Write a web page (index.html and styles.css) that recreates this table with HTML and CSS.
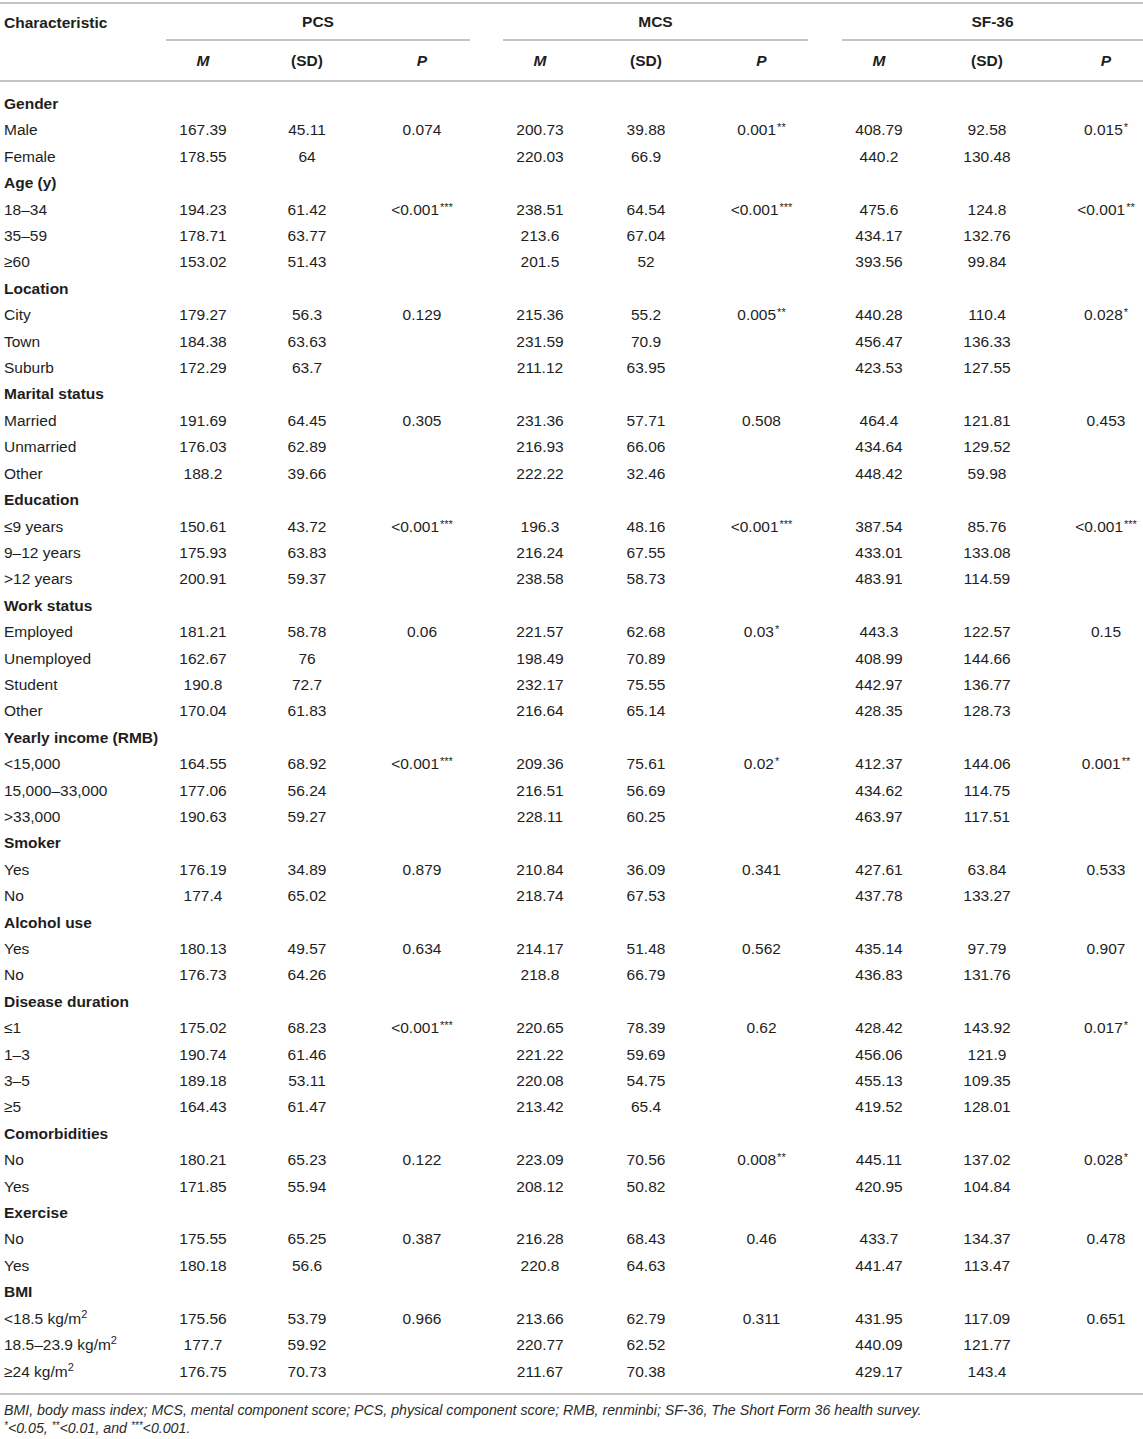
FILE: index.html
```html
<!DOCTYPE html>
<html>
<head>
<meta charset="utf-8">
<link rel="stylesheet" href="styles.css">
</head>
<body>
<table class="t">
<colgroup>
<col class="w-char"><col class="w74"><col class="w134"><col class="w96"><col class="w33">
<col class="w74"><col class="w138"><col class="w93"><col class="w34">
<col class="w74"><col class="w142"><col class="w85">
</colgroup>
<thead>
<tr class="h1">
<th class="char">Characteristic</th>
<th class="grp" colspan="3">PCS</th><th></th>
<th class="grp" colspan="3">MCS</th><th></th>
<th class="grp sf" colspan="3">SF-36</th>
</tr>
<tr class="h2">
<th></th>
<th><i>M</i></th><th>(SD)</th><th><i>P</i></th><th></th>
<th><i>M</i></th><th>(SD)</th><th><i>P</i></th><th></th>
<th><i>M</i></th><th>(SD)</th><th class="lastp"><i>P</i></th>
</tr>
</thead>
<tbody id="tb">
</tbody>
</table>
<div class="notes">
<p><i>BMI, body mass index; MCS, mental component score; PCS, physical component score; RMB, renminbi; SF-36, The Short Form 36 health survey.</i></p>
<p><i><sup>*</sup>&lt;0.05, <sup>**</sup>&lt;0.01, and <sup>***</sup>&lt;0.001.</i></p>
</div>
<script src="app.js"></script>
</body>
</html>
```
FILE: app.js
```js
var data = [
["#Gender"],
["Male","167.39","45.11","0.074","200.73","39.88","0.001**","408.79","92.58","0.015*"],
["Female","178.55","64","","220.03","66.9","","440.2","130.48",""],
["#Age (y)"],
["18–34","194.23","61.42","<0.001***","238.51","64.54","<0.001***","475.6","124.8","<0.001**"],
["35–59","178.71","63.77","","213.6","67.04","","434.17","132.76",""],
["≥60","153.02","51.43","","201.5","52","","393.56","99.84",""],
["#Location"],
["City","179.27","56.3","0.129","215.36","55.2","0.005**","440.28","110.4","0.028*"],
["Town","184.38","63.63","","231.59","70.9","","456.47","136.33",""],
["Suburb","172.29","63.7","","211.12","63.95","","423.53","127.55",""],
["#Marital status"],
["Married","191.69","64.45","0.305","231.36","57.71","0.508","464.4","121.81","0.453"],
["Unmarried","176.03","62.89","","216.93","66.06","","434.64","129.52",""],
["Other","188.2","39.66","","222.22","32.46","","448.42","59.98",""],
["#Education"],
["≤9 years","150.61","43.72","<0.001***","196.3","48.16","<0.001***","387.54","85.76","<0.001***"],
["9–12 years","175.93","63.83","","216.24","67.55","","433.01","133.08",""],
[">12 years","200.91","59.37","","238.58","58.73","","483.91","114.59",""],
["#Work status"],
["Employed","181.21","58.78","0.06","221.57","62.68","0.03*","443.3","122.57","0.15"],
["Unemployed","162.67","76","","198.49","70.89","","408.99","144.66",""],
["Student","190.8","72.7","","232.17","75.55","","442.97","136.77",""],
["Other","170.04","61.83","","216.64","65.14","","428.35","128.73",""],
["#Yearly income (RMB)"],
["<15,000","164.55","68.92","<0.001***","209.36","75.61","0.02*","412.37","144.06","0.001**"],
["15,000–33,000","177.06","56.24","","216.51","56.69","","434.62","114.75",""],
[">33,000","190.63","59.27","","228.11","60.25","","463.97","117.51",""],
["#Smoker"],
["Yes","176.19","34.89","0.879","210.84","36.09","0.341","427.61","63.84","0.533"],
["No","177.4","65.02","","218.74","67.53","","437.78","133.27",""],
["#Alcohol use"],
["Yes","180.13","49.57","0.634","214.17","51.48","0.562","435.14","97.79","0.907"],
["No","176.73","64.26","","218.8","66.79","","436.83","131.76",""],
["#Disease duration"],
["≤1","175.02","68.23","<0.001***","220.65","78.39","0.62","428.42","143.92","0.017*"],
["1–3","190.74","61.46","","221.22","59.69","","456.06","121.9",""],
["3–5","189.18","53.11","","220.08","54.75","","455.13","109.35",""],
["≥5","164.43","61.47","","213.42","65.4","","419.52","128.01",""],
["#Comorbidities"],
["No","180.21","65.23","0.122","223.09","70.56","0.008**","445.11","137.02","0.028*"],
["Yes","171.85","55.94","","208.12","50.82","","420.95","104.84",""],
["#Exercise"],
["No","175.55","65.25","0.387","216.28","68.43","0.46","433.7","134.37","0.478"],
["Yes","180.18","56.6","","220.8","64.63","","441.47","113.47",""],
["#BMI"],
["<18.5 kg/m^2","175.56","53.79","0.966","213.66","62.79","0.311","431.95","117.09","0.651"],
["18.5–23.9 kg/m^2","177.7","59.92","","220.77","62.52","","440.09","121.77",""],
["≥24 kg/m^2","176.75","70.73","","211.67","70.38","","429.17","143.4",""]
];
function esc(s){return s.replace(/&/g,"&amp;").replace(/</g,"&lt;").replace(/>/g,"&gt;");}
function fmt(s){
  var m = s.match(/^(.*?)(\*+)$/);
  if (m) return esc(m[1]) + "<sup>" + m[2] + "</sup>";
  if (s.indexOf("^2") >= 0) return esc(s.replace("^2","")) + "<sup class=\"sq\">2</sup>";
  return esc(s);
}
var html = "";
data.forEach(function(r){
  if (r[0].charAt(0) === "#") {
    html += "<tr class=\"sec\"><td class=\"lbl\" colspan=\"12\">" + esc(r[0].slice(1)) + "</td></tr>";
  } else {
    html += "<tr><td class=\"lbl\">" + fmt(r[0]) + "</td>";
    for (var g = 0; g < 3; g++) {
      for (var k = 0; k < 3; k++) {
        var cls = (g === 2 && k === 2) ? " class=\"lastp\"" : "";
        html += "<td" + cls + ">" + fmt(r[1 + g*3 + k]) + "</td>";
      }
      if (g < 2) html += "<td></td>";
    }
    html += "</tr>";
  }
});
document.getElementById("tb").innerHTML = html;
```
FILE: styles.css
```css
html, body {
  margin: 0;
  padding: 0;
  background: #fff;
}
body {
  font-family: "Liberation Sans", Arial, sans-serif;
  font-size: 15.5px;
  color: #1e1e1e;
}
.t {
  margin-top: 2px;
  width: 1143px;
  table-layout: fixed;
  border-collapse: separate;
  border-spacing: 0;
}
.w-char { width: 166px; }
.w74 { width: 74px; }
.w134 { width: 134px; }
.w96 { width: 96px; }
.w33 { width: 33px; }
.w138 { width: 138px; }
.w93 { width: 93px; }
.w34 { width: 34px; }
.w142 { width: 142px; }
.w85 { width: 85px; }

th {
  font-weight: bold;
  text-align: center;
  padding: 0;
  vertical-align: middle;
}
.h1 th {
  border-top: 2px solid #c4c4c4;
  height: 35px;
}
.h1 th.grp {
  border-bottom: 2px solid #c4c4c4;
}
.h1 th.char {
  text-align: left;
  padding-left: 4px;
}
.h2 th {
  height: 39px;
  border-bottom: 2px solid #c4c4c4;
}
td {
  padding: 0;
  height: 26.4px;
  line-height: 26.4px;
  text-align: center;
  white-space: nowrap;
  vertical-align: middle;
}
td.lbl {
  text-align: left;
  padding-left: 4px;
}
.sec td {
  font-weight: bold;
}
.lastp {
  padding-left: 11px;
}
tbody tr:first-child td {
  padding-top: 9px;
}
tbody tr:last-child td {
  padding-bottom: 8px;
  border-bottom: 2px solid #c4c4c4;
}
sup {
  font-size: 11px;
  line-height: 0;
  vertical-align: 4px;
  margin-left: 1px;
}
sup.sq {
  font-size: 11px;
  vertical-align: 6px;
  margin-left: 0;
}
.notes {
  margin-top: 6px;
  padding-left: 4px;
  font-size: 14.2px;
  color: #2a2a2a;
}
.notes p {
  margin: 0;
  line-height: 18px;
}
.notes sup {
  font-size: 10px;
  vertical-align: 4px;
  margin-left: 0;
}
```
